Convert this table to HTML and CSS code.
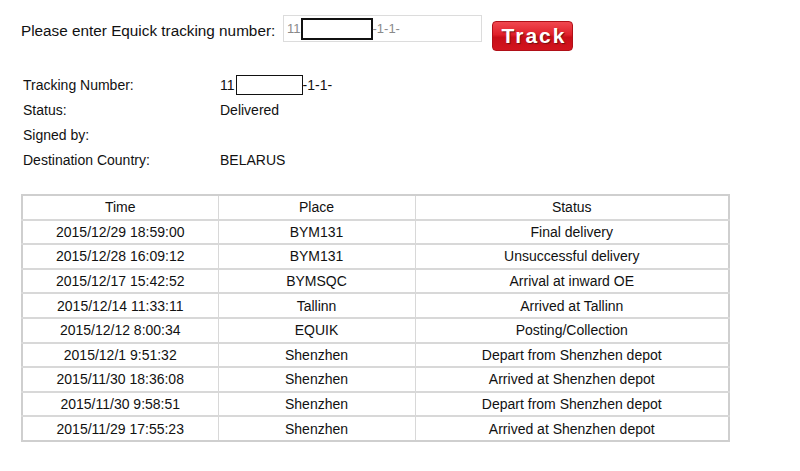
FILE: index.html
```html
<!DOCTYPE html>
<html>
<head>
<meta charset="utf-8">
<link rel="stylesheet" href="styles.css">
</head>
<body>
<div class="page">
  <div class="search">
    <span class="prompt">Please enter Equick tracking number:</span>
    <div class="field"><span>11</span><span class="mask mask-in"></span><span>-1-1-</span></div>
    <button class="track">Track</button>
  </div>
  <div class="info">
    <div class="row"><span class="label">Tracking Number:</span><span class="value">11<span class="mask mask-info"></span>-1-1-</span></div>
    <div class="row"><span class="label">Status:</span><span class="value">Delivered</span></div>
    <div class="row"><span class="label">Signed by:</span><span class="value"></span></div>
    <div class="row"><span class="label">Destination Country:</span><span class="value">BELARUS</span></div>
  </div>
  <table class="events">
    <colgroup><col class="c1"><col class="c2"><col class="c3"></colgroup>
    <tr><th>Time</th><th>Place</th><th>Status</th></tr>
    <tr><td>2015/12/29 18:59:00</td><td>BYM131</td><td>Final delivery</td></tr>
    <tr><td>2015/12/28 16:09:12</td><td>BYM131</td><td>Unsuccessful delivery</td></tr>
    <tr><td>2015/12/17 15:42:52</td><td>BYMSQC</td><td>Arrival at inward OE</td></tr>
    <tr><td>2015/12/14 11:33:11</td><td>Tallinn</td><td>Arrived at Tallinn</td></tr>
    <tr><td>2015/12/12 8:00:34</td><td>EQUIK</td><td>Posting/Collection</td></tr>
    <tr><td>2015/12/1 9:51:32</td><td>Shenzhen</td><td>Depart from Shenzhen depot</td></tr>
    <tr><td>2015/11/30 18:36:08</td><td>Shenzhen</td><td>Arrived at Shenzhen depot</td></tr>
    <tr><td>2015/11/30 9:58:51</td><td>Shenzhen</td><td>Depart from Shenzhen depot</td></tr>
    <tr><td>2015/11/29 17:55:23</td><td>Shenzhen</td><td>Arrived at Shenzhen depot</td></tr>
  </table>
</div>
</body>
</html>
```
FILE: styles.css
```css
html, body {
  margin: 0;
  padding: 0;
  background: #fff;
}
body {
  font-family: "Liberation Sans", Arial, sans-serif;
  color: #111;
}
.page {
  padding: 15px 0 0 21px;
}
.search {
  display: flex;
  align-items: flex-start;
  height: 36px;
}
.prompt {
  font-size: 15.3px;
  margin-top: 7px;
  width: 262px;
}
.field {
  box-sizing: border-box;
  width: 199px;
  height: 27px;
  border: 1px solid #dcdcdc;
  display: flex;
  align-items: center;
  padding-left: 3px;
  font-size: 13px;
  color: #8a8a8a;
}
.mask {
  display: inline-block;
  box-sizing: border-box;
  background: #fff;
  border: 2px solid #111;
}
.mask-in {
  width: 72px;
  height: 22px;
}
.track {
  margin: 6px 0 0 10px;
  box-sizing: border-box;
  width: 81px;
  height: 30px;
  border: 1px solid #b01018;
  border-radius: 4px;
  background: linear-gradient(#f04850 0%, #e0202a 45%, #c80e18 55%, #d2141e 100%);
  color: #fff;
  font-family: "Liberation Sans", Arial, sans-serif;
  font-weight: bold;
  font-size: 21px;
  letter-spacing: 2px;
  padding: 0 0 0 3px;
  text-shadow: 1px 1px 1px #701010;
  line-height: 26px;
}
.info {
  margin: 21px 0 0 2px;
  font-size: 14px;
}
.row {
  display: flex;
  height: 25px;
  align-items: center;
}
.label {
  width: 197px;
}
.value {
  display: flex;
  align-items: center;
}
.mask-info {
  width: 67px;
  height: 20px;
  margin-left: 1px;
  border-width: 1.5px;
}
.events {
  margin-top: 22px;
  width: 709px;
  border-collapse: collapse;
  border: 2px solid #cfcfcf;
  font-size: 14px;
  table-layout: fixed;
}
.c1 { width: 196px; }
.c2 { width: 197px; }
.events th, .events td {
  border: 1px solid #d8d8d8;
  border-width: 2px 1px 0 1px;
  height: 22.6px;
  padding: 0;
  text-align: center;
  font-weight: normal;
  vertical-align: middle;
}
.events tr:first-child th {
  border-top: 0;
}
```
